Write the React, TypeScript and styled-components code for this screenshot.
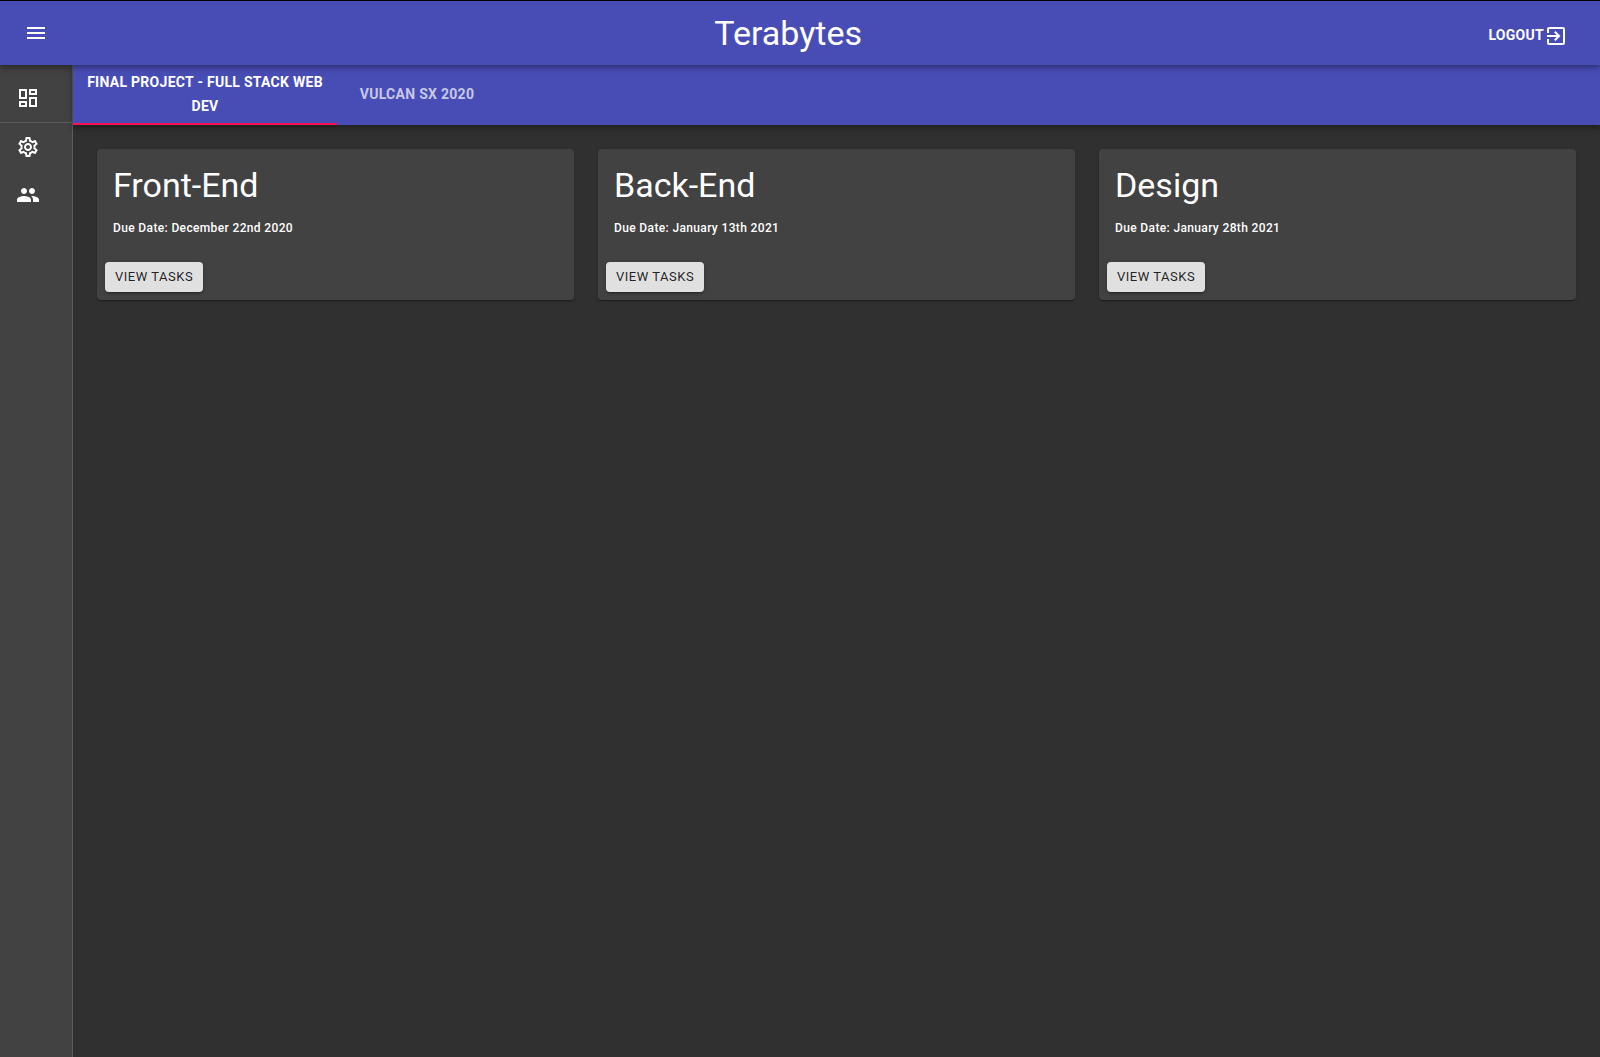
import React, { useState } from 'react';
import styled, { createGlobalStyle } from 'styled-components';
import {
  MdMenu,
  MdOutlineDashboard,
  MdOutlineExitToApp,
  MdOutlineSettings,
  MdPeople,
} from 'react-icons/md';

const color = {
  page: '#303030',
  paper: '#424242',
  primary: '#484db5',
  secondary: '#fa1154',
  divider: '#5c5c5c',
  text: '#ffffff',
};

const elevation = {
  card: '0 2px 1px -1px rgba(0,0,0,0.2), 0 1px 1px 0 rgba(0,0,0,0.14), 0 1px 3px 0 rgba(0,0,0,0.12)',
  button: '0 3px 1px -2px rgba(0,0,0,0.2), 0 2px 2px 0 rgba(0,0,0,0.14), 0 1px 5px 0 rgba(0,0,0,0.12)',
  bar: '0 2px 4px -1px rgba(0,0,0,0.2), 0 4px 5px 0 rgba(0,0,0,0.14), 0 1px 10px 0 rgba(0,0,0,0.12)',
};

const GlobalStyle = createGlobalStyle`
  *, *::before, *::after { box-sizing: border-box; }
  body {
    margin: 0;
    background: ${color.page};
    color: ${color.text};
    font-family: Roboto, "Liberation Sans", sans-serif;
  }
  button { font-family: inherit; border: 0; cursor: pointer; }
`;

const Page = styled.div`
  display: flex;
  flex-direction: column;
  min-height: 100vh;
  border-top: 1px solid #000000;
`;

const TopBar = styled.header`
  position: relative;
  z-index: 2;
  display: flex;
  align-items: center;
  height: 64px;
  padding: 0 24px 0 12px;
  background: ${color.primary};
  box-shadow: ${elevation.bar};
`;

const MenuButton = styled.button`
  display: flex;
  padding: 12px;
  margin-right: 36px;
  background: transparent;
  color: inherit;
`;

const Title = styled.h1`
  flex: 1;
  margin: 0;
  text-align: center;
  font-size: 34px;
  font-weight: 400;
  line-height: 42px;
`;

const LogoutButton = styled.button`
  display: flex;
  align-items: flex-start;
  padding: 10px 8px 4px;
  background: transparent;
  color: inherit;
  font-size: 14px;
  font-weight: 700;
  line-height: 22px;
  letter-spacing: 0.02em;
  text-transform: uppercase;
`;

const Body = styled.div`
  display: flex;
  flex: 1;
`;

const Sidebar = styled.nav`
  flex: none;
  width: 73px;
  padding-top: 9px;
  background: ${color.paper};
  border-right: 1px solid ${color.divider};
`;

const NavList = styled.ul`
  margin: 0;
  padding: 0;
  list-style: none;

  & + & {
    border-top: 1px solid ${color.divider};
  }
`;

const NavLink = styled.a`
  display: flex;
  padding: 12px 16px;
  color: ${color.text};
`;

const Main = styled.main`
  flex: 1;
  min-width: 0;
`;

const TabBar = styled.div`
  position: relative;
  z-index: 1;
  display: flex;
  background: ${color.primary};
  box-shadow: ${elevation.bar};
`;

const Tab = styled.button<{ $active: boolean }>`
  min-width: 160px;
  max-width: 264px;
  padding: 5px 12px 7px;
  background: transparent;
  box-shadow: ${(p) => (p.$active ? `inset 0 -2px ${color.secondary}` : 'none')};
  color: ${(p) => (p.$active ? color.text : 'rgba(255, 255, 255, 0.7)')};
  font-size: 14px;
  font-weight: 700;
  line-height: 24px;
  letter-spacing: 0.02em;
  text-transform: uppercase;
`;

const CardGrid = styled.div`
  display: grid;
  grid-template-columns: repeat(3, 1fr);
  gap: 24px;
  padding: 24px;
`;

const Card = styled.article`
  background: ${color.paper};
  border-radius: 4px;
  box-shadow: ${elevation.card};
`;

const CardContent = styled.div`
  padding: 16px;
`;

const CardTitle = styled.h2`
  margin: 0 0 13px;
  font-size: 34px;
  font-weight: 400;
  line-height: 40px;
`;

const DueDate = styled.p`
  margin: 0;
  font-size: 12px;
  font-weight: 500;
  line-height: 20px;
  letter-spacing: 0.03em;
`;

const CardActions = styled.div`
  display: flex;
  padding: 8px;
`;

const TaskButton = styled.button`
  padding: 4px 10px;
  border-radius: 4px;
  background: #e0e0e0;
  box-shadow: ${elevation.button};
  color: rgba(0, 0, 0, 0.87);
  font-size: 13px;
  font-weight: 400;
  line-height: 22px;
  letter-spacing: 0.04em;
  text-transform: uppercase;
`;

const projects = ['Final Project - Full Stack Web Dev', 'Vulcan SX 2020'];

const categories = [
  { name: 'Front-End', due: 'December 22nd 2020' },
  { name: 'Back-End', due: 'January 13th 2021' },
  { name: 'Design', due: 'January 28th 2021' },
];

export default function App() {
  const [active, setActive] = useState(0);

  return (
    <Page>
      <GlobalStyle />
      <TopBar>
        <MenuButton type="button" aria-label="Open menu">
          <MdMenu size={24} />
        </MenuButton>
        <Title>Terabytes</Title>
        <LogoutButton type="button">
          Logout
          <MdOutlineExitToApp size={24} />
        </LogoutButton>
      </TopBar>
      <Body>
        <Sidebar aria-label="Main">
          <NavList>
            <li>
              <NavLink href="#dashboard" aria-label="Dashboard">
                <MdOutlineDashboard size={24} />
              </NavLink>
            </li>
          </NavList>
          <NavList>
            <li>
              <NavLink href="#settings" aria-label="Settings">
                <MdOutlineSettings size={24} />
              </NavLink>
            </li>
            <li>
              <NavLink href="#people" aria-label="People">
                <MdPeople size={24} />
              </NavLink>
            </li>
          </NavList>
        </Sidebar>
        <Main>
          <TabBar role="tablist">
            {projects.map((name, i) => (
              <Tab
                key={name}
                type="button"
                role="tab"
                aria-selected={i === active}
                $active={i === active}
                onClick={() => setActive(i)}
              >
                {name}
              </Tab>
            ))}
          </TabBar>
          <CardGrid>
            {categories.map((c) => (
              <Card key={c.name}>
                <CardContent>
                  <CardTitle>{c.name}</CardTitle>
                  <DueDate>Due Date: {c.due}</DueDate>
                </CardContent>
                <CardActions>
                  <TaskButton type="button">View Tasks</TaskButton>
                </CardActions>
              </Card>
            ))}
          </CardGrid>
        </Main>
      </Body>
    </Page>
  );
}
